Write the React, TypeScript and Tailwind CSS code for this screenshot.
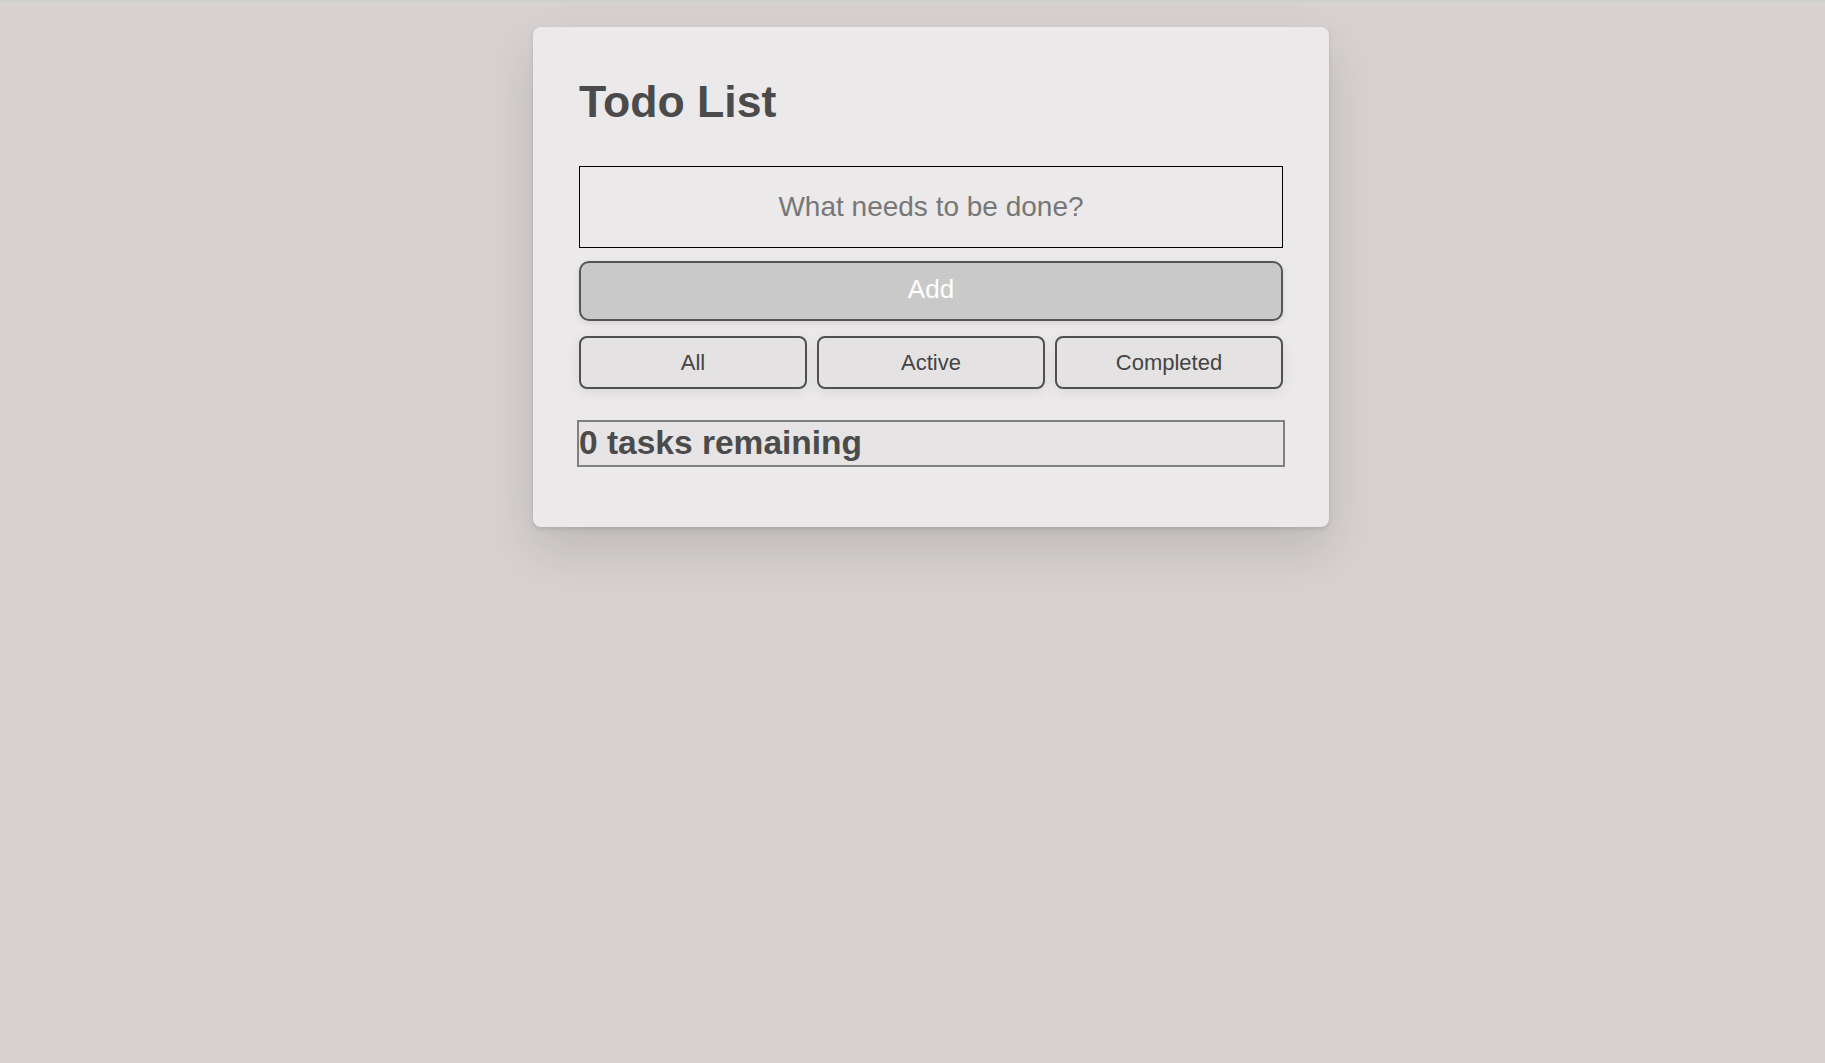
import React, { useState } from "react";

export default function App() {
  const [text, setText] = useState("");
  const [todos, setTodos] = useState<{ t: string; done: boolean }[]>([]);
  const [filter, setFilter] = useState("all");
  const remaining = todos.filter((x) => !x.done).length;

  return (
    <div
      className="min-h-screen bg-[#d7d1d1] text-[#4b4b4b]"
      style={{ fontFamily: '"Liberation Sans", Arial, sans-serif' }}
    >
      <div className="h-[2px] bg-[#cfd1ce]" />
      <div className="flex justify-center pl-[37px]">
        <div className="mt-[25px] flex w-[796px] flex-col rounded-[8px] bg-[#ebe9ea] px-[46px] pb-[60px] pt-[53px] shadow-[0_22px_50px_rgba(0,0,0,0.12),0_2px_4px_rgba(0,0,0,0.12)]">
          <h1 className="m-0 text-[44.6px] font-bold leading-[43px] text-[#4b4b4b]">Todo List</h1>
          <input
            value={text}
            onChange={(e) => setText(e.target.value)}
            placeholder="What needs to be done?"
            className="mt-[43px] h-[82px] w-full border border-black bg-transparent text-center text-[28px] text-[#4b4b4b] outline-none placeholder:text-[#777]"
          />
          <button
            onClick={() => {
              if (text.trim()) {
                setTodos([...todos, { t: text.trim(), done: false }]);
                setText("");
              }
            }}
            className="mt-[13px] flex h-[60px] w-full items-center justify-center rounded-[10px] border-2 border-[#555] bg-[#c9c9c9] pb-[3px] text-[26px] text-white shadow-[0_2px_6px_rgba(0,0,0,0.1)]"
          >
            Add
          </button>
          <div className="mt-[15px] grid grid-cols-3 gap-[10px]">
            {[
              ["all", "All"],
              ["active", "Active"],
              ["completed", "Completed"],
            ].map(([k, label]) => (
              <button
                key={k}
                onClick={() => setFilter(k)}
                className="flex h-[53px] items-center justify-center rounded-[8px] border-2 border-[#505050] bg-[#e4e2e3] text-[22px] text-[#444] shadow-[0_3px_14px_rgba(0,0,0,0.08)]"
              >
                {label}
              </button>
            ))}
          </div>
          <div className="mx-[-2px] mt-[31px] h-[47px] border-2 border-[#808080] bg-[#e6e4e5]">
            <div className="text-[33.5px] font-bold leading-[42px] text-[#4b4b4b]">
              {remaining} tasks remaining
            </div>
          </div>
          {filter === "__none" && null}
        </div>
      </div>
    </div>
  );
}
